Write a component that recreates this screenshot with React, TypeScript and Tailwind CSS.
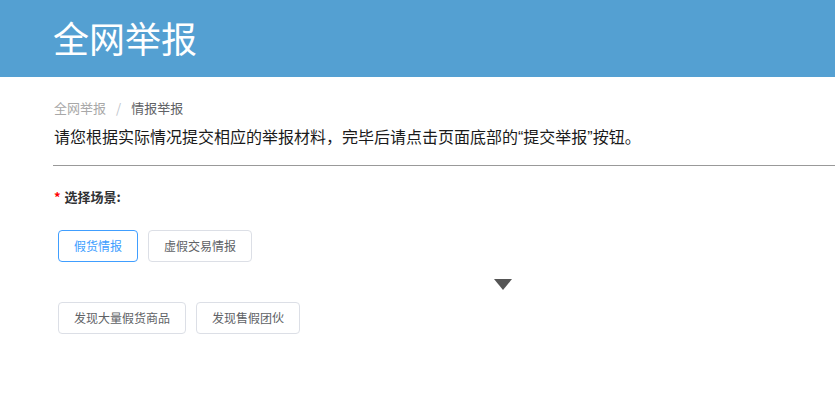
import React from "react";

const font = { fontFamily: '"Noto Sans CJK SC", "Noto Sans", sans-serif' };
const descFont = { fontFamily: '"Liberation Sans", "Noto Sans CJK SC", sans-serif' };

function Btn({ label, active }: { label: string; active?: boolean }) {
  return (
    <button
      className={
        active
          ? "h-[32px] px-[15px] rounded-[4px] border border-[#409eff] text-[#409eff] text-[12px] bg-white leading-none"
          : "h-[32px] px-[15px] rounded-[4px] border border-[#dcdfe6] text-[#606266] text-[12px] bg-white leading-none"
      }
    >
      {label}
    </button>
  );
}

export default function App() {
  return (
    <div className="w-[835px] h-[414px] bg-white overflow-hidden" style={font}>
      <div className="h-[77px] bg-[#54a0d2] flex items-center pl-[53px]">
        <h1 className="text-white text-[36px] leading-none font-normal -mt-[4px]">全网举报</h1>
      </div>
      <div className="pl-[54px] pt-[22px] flex items-center text-[13px] leading-[18px]">
        <span className="text-[#a8a8a8]">全网举报</span>
        <span className="text-[#c0c4cc] mx-[10px]">/</span>
        <span className="text-[#606266]">情报举报</span>
      </div>
      <p className="pl-[54px] mt-[11px] text-[16px] leading-[20px] text-[#1a1a1a]" style={descFont}>
        请您根据实际情况提交相应的举报材料，完毕后请点击页面底部的“提交举报”按钮。
      </p>
      <div className="ml-[53px] mt-[17px] h-px bg-[#999]" />
      <div className="pl-[54px] mt-[22px] flex items-center text-[13px] leading-[18px] font-bold text-[#303133]">
        <span className="text-[#f00] mr-[4px]">*</span>
        <span>选择场景:</span>
      </div>
      <div className="pl-[58px] mt-[24px] flex gap-[10px]">
        <Btn label="假货情报" active />
        <Btn label="虚假交易情报" />
      </div>
      <div className="ml-[494px] mt-[17px] w-0 h-0 border-l-[9px] border-r-[9px] border-t-[11px] border-l-transparent border-r-transparent border-t-[#555]" />
      <div className="pl-[58px] mt-[12px] flex gap-[10px]">
        <Btn label="发现大量假货商品" />
        <Btn label="发现售假团伙" />
      </div>
    </div>
  );
}
